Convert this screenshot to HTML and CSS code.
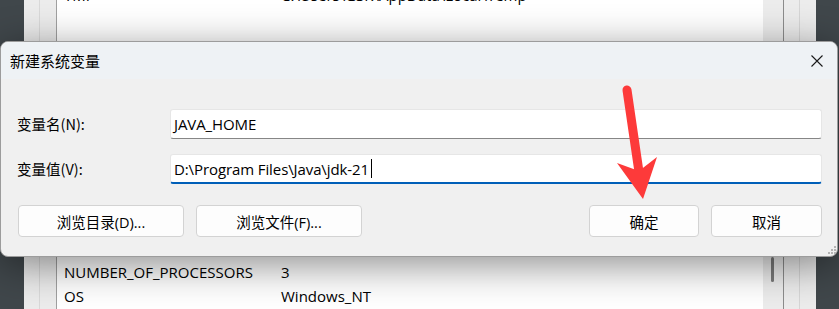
FILE: index.html
```html
<!DOCTYPE html>
<html lang="zh-CN">
<head>
<meta charset="utf-8">
<title>新建系统变量</title>
<link rel="stylesheet" href="styles.css">
</head>
<body>
<div class="desk">
  <div class="envwin">
    <div class="gutter"><div class="gutter-a"></div><div class="gutter-b"></div></div>
    <div class="list">
      <div class="rows">
        <div class="row"><span class="k">TMP</span><span class="v">C:\Users\GSK\AppData\Local\Temp</span></div>
        <div class="filler"></div>
        <div class="row"><span class="k">NUMBER_OF_PROCESSORS</span><span class="v">3</span></div>
        <div class="row"><span class="k">OS</span><span class="v">Windows_NT</span></div>
      </div>
      <div class="track"><div class="thumb"></div></div>
    </div>
    <div class="side"><div class="side-a"></div><div class="side-b"></div></div>
  </div>

  <div class="dialog">
    <div class="titlebar">
      <span class="title">新建系统变量</span>
      <svg class="close" width="12" height="12" viewBox="0 0 12 12"><path d="M0.5 0.5 L11.5 11.5 M11.5 0.5 L0.5 11.5" stroke="#1a1a1a" stroke-width="1.1" fill="none"/></svg>
    </div>
    <div class="body">
      <div class="form">
        <label class="lbl">变量名(N):</label>
        <div class="field">JAVA_HOME</div>
        <label class="lbl">变量值(V):</label>
        <div class="field focus">D:\Program Files\Java\jdk-21<span class="caret"></span></div>
      </div>
      <div class="buttons">
        <button class="btn wide">浏览目录(D)...</button>
        <button class="btn wide">浏览文件(F)...</button>
        <span class="spacer"></span>
        <button class="btn">确定</button>
        <button class="btn cancel">取消</button>
      </div>
      <div class="grip">
        <i class="g13"></i>
        <i class="g22"></i><i class="g23"></i>
        <i class="g31"></i><i class="g32"></i><i class="g33"></i>
      </div>
    </div>
  </div>

  <svg class="arrow" width="839" height="309" viewBox="0 0 839 309">
    <line x1="627" y1="90" x2="639" y2="172" stroke="#fd3a3a" stroke-width="9" stroke-linecap="round"/>
    <polygon points="617,163 639,171 657,157 643,199" fill="#fd3a3a"/>
  </svg>
</div>
</body>
</html>
```

FILE: styles.css
```css
* { box-sizing: border-box; }
html, body { margin: 0; padding: 0; }
body {
  width: 839px;
  height: 309px;
  overflow: hidden;
  background: #40474b;
  font-family: "Open Sans", "Noto Sans CJK SC", sans-serif;
  font-size: 15px;
  color: #000;
}
.desk { position: relative; width: 839px; height: 309px; }

/* background window */
.envwin {
  position: absolute;
  left: 24px; top: 0;
  width: 792px; height: 309px;
  display: flex;
  background: #e9e9e9;
}
.gutter { width: 33px; display: flex; }
.gutter-a { width: 16px; border-right: 1px solid #d9d9d9; background: #ececec; }
.gutter-b { flex: 1; border-right: 1px solid #a0a0a0; background: #ececec; }
.list {
  width: 727px;
  background: #fff;
  display: flex;
  border-right: 1px solid #8c8c8c;
}
.rows { flex: 1; margin-top: -17px; padding-left: 7px; }
.row { height: 24px; display: flex; align-items: center; }
.filler { height: 253px; }
.k { width: 217px; }
.track { width: 20px; background: #ececec; position: relative; }
.thumb { position: absolute; left: 8px; top: 257px; width: 3px; height: 25px; border-radius: 2px; background: #7a7a7a; }
.side { flex: 1; display: flex; }
.side-a { width: 16px; border-right: 1px solid #d6d6d6; background: #ececec; }
.side-b { flex: 1; background: #ececec; }

/* dialog */
.dialog {
  position: absolute;
  left: 0; top: 41px;
  width: 838px; height: 216px;
  border: 1px solid #9c9c9c;
  border-radius: 8px;
  background: #f0f0f0;
  box-shadow: 0 8px 40px rgba(0,0,0,0.45);
  display: flex;
  flex-direction: column;
  overflow: hidden;
  font-family: "Noto Sans CJK SC", sans-serif;
}
.titlebar {
  height: 37px;
  background: #eef2f5;
  display: flex;
  align-items: center;
  justify-content: space-between;
  padding: 0 14px 0 9px;
}
.title { font-size: 15px; line-height: 1; }
.close { display: block; }
.body {
  flex: 1;
  position: relative;
  padding: 30px 15px 0 16px;
}
.form {
  display: grid;
  grid-template-columns: 153px 1fr;
  row-gap: 15px;
  align-items: center;
}
.lbl { font-size: 14.5px; line-height: 1; }
.field {
  height: 30px;
  background: #fff;
  border: 1px solid #e6e6e6;
  border-bottom: 1px solid #868686;
  border-radius: 3px;
  padding: 0 3px;
  display: flex;
  align-items: center;
  font-family: "Open Sans", sans-serif;
  font-size: 15px;
  letter-spacing: -0.1px;
}
.field.focus { border-bottom: 2px solid #005fb8; }
.caret { display: inline-block; width: 1px; height: 19px; background: #000; margin-left: 2px; }
.buttons {
  display: flex;
  gap: 12px;
  margin-top: 21px;
  padding-left: 1px;
}
.spacer { flex: 1; }
.btn {
  height: 32px;
  width: 110px;
  background: #fdfdfd;
  border: 1px solid #d3d3d3;
  border-radius: 4px;
  font-family: "Open Sans", "Noto Sans CJK SC", sans-serif;
  font-size: 14.5px;
  color: #000;
  padding: 0;
}
.btn.wide { width: 166px; }
.btn.cancel { width: 111px; }
.grip {
  position: absolute;
  right: 1px; bottom: 2px;
  display: grid;
  grid-template-columns: repeat(3, 2px);
  grid-template-rows: repeat(3, 2px);
  gap: 1px;
}
.grip i { display: block; width: 2px; height: 2px; background: #b4b4b4; }
.g13 { grid-area: 1 / 3; }
.g22 { grid-area: 2 / 2; }
.g23 { grid-area: 2 / 3; }
.g31 { grid-area: 3 / 1; }
.g32 { grid-area: 3 / 2; }
.g33 { grid-area: 3 / 3; }

.arrow { position: absolute; left: 0; top: 0; pointer-events: none; }
```
